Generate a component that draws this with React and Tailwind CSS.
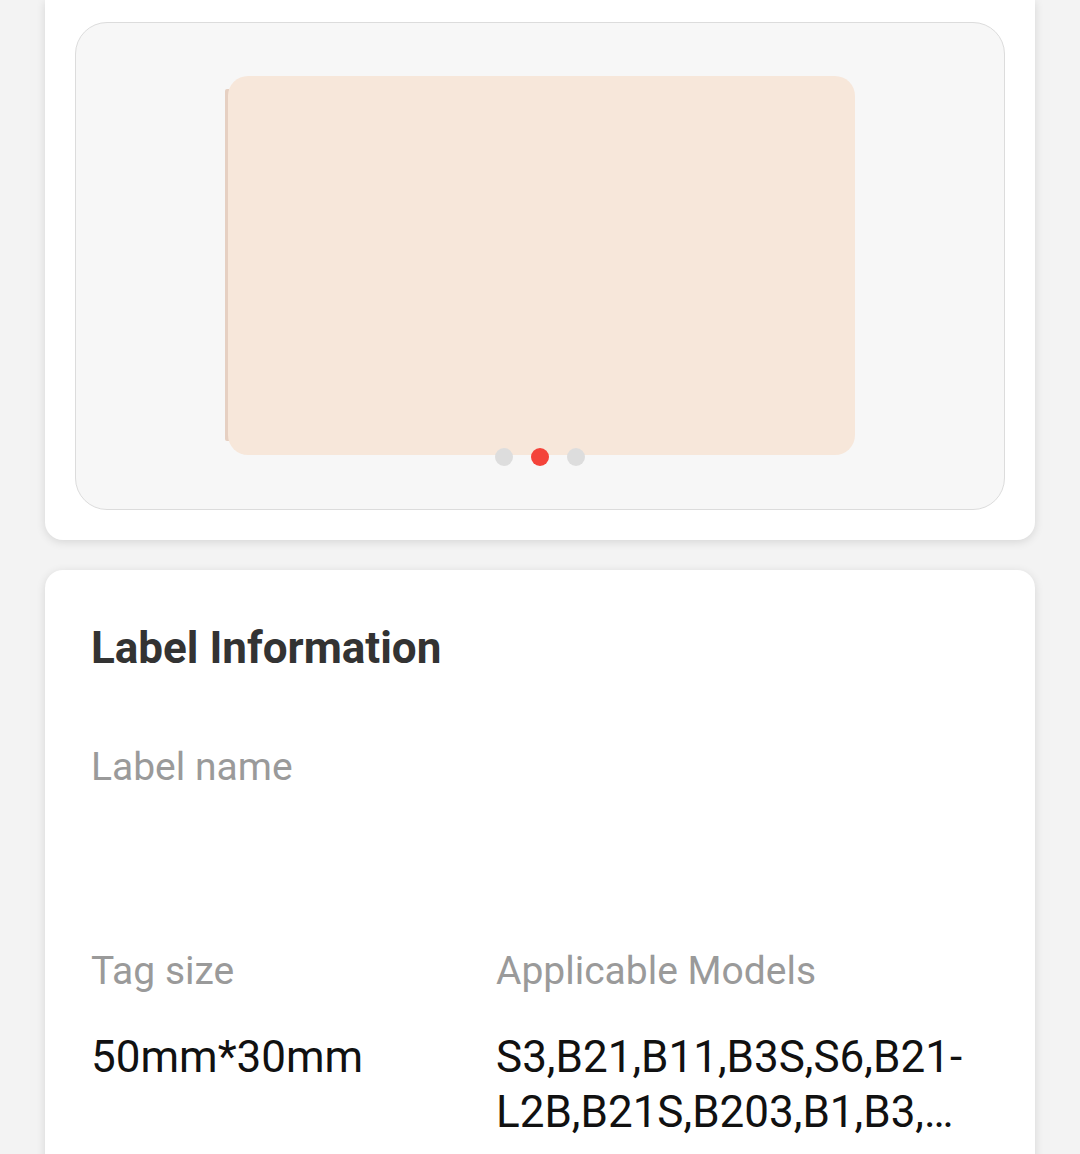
import React from "react";

export default function App() {
  return (
    <div
      className="w-[1080px] h-[1154px] overflow-hidden bg-[#f3f3f3]"
      style={{ fontFamily: "Roboto, 'Noto Sans', sans-serif" }}
    >
      <div className="mx-[45px] bg-white rounded-b-[18px] shadow-[0_2px_10px_rgba(0,0,0,0.12)] px-[30px] pt-[22px] pb-[30px]">
        <div className="relative h-[488px] bg-[#f7f7f7] border border-[#dcdcdc] rounded-[32px]">
          <div className="absolute left-[149px] top-[66px] w-[4px] h-[352px] bg-[#e6d0c2] rounded-l-[2px]" />
          <div className="absolute left-[152px] top-[53px] w-[627px] h-[379px] bg-[#f7e7da] rounded-[20px]" />
          <div className="absolute left-0 right-0 top-[425px] flex justify-center gap-[18px]">
            <span className="w-[18px] h-[18px] rounded-full bg-[#dddddd]" />
            <span className="w-[18px] h-[18px] rounded-full bg-[#f4433a]" />
            <span className="w-[18px] h-[18px] rounded-full bg-[#dddddd]" />
          </div>
        </div>
      </div>

      <div className="mx-[45px] mt-[30px] bg-white rounded-[18px] shadow-[0_2px_10px_rgba(0,0,0,0.12)] pl-[46px] pr-[46px] pt-[50px] pb-[40px]">
        <div className="text-[44px] leading-[56px] font-bold text-[#333333]">Label Information</div>
        <div className="mt-[69px] text-[39px] leading-[44px] text-[#9a9a9a]">Label name</div>
        <div className="h-[160px]" />
        <div className="grid grid-cols-[405px_1fr]">
          <div className="text-[39px] leading-[44px] text-[#9a9a9a]">Tag size</div>
          <div className="text-[39px] leading-[44px] text-[#9a9a9a]">Applicable Models</div>
          <div className="mt-[37px] text-[44px] leading-[55px] text-[#111111]">50mm*30mm</div>
          <div className="mt-[37px] w-[476px] text-[44px] leading-[55px] text-[#111111] line-clamp-2 break-words">
            S3,B21,B11,B3S,S6,B21-L2B,B21S,B203,B1,B3,B3S_P,B21_Pro,B1_Pro
          </div>
        </div>
      </div>
    </div>
  );
}
